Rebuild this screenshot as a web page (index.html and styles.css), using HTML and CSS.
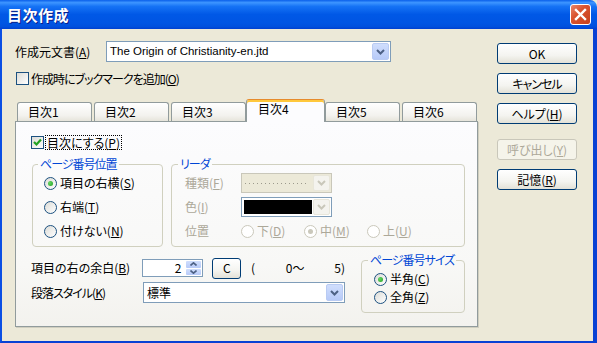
FILE: index.html
```html
<!DOCTYPE html>
<html lang="ja">
<head>
    <meta charset="UTF-8">
    <title>目次作成</title>
    <link rel="stylesheet" href="styles.css">
</head>
<body>
    <div class="window">
        <div class="titlebar">
            <span class="title">目次作成</span>
            <span class="close-btn">
                <svg width="13" height="13" viewBox="0 0 13 13"><path d="M2 2 L11 11 M11 2 L2 11" stroke="#fff" stroke-width="2.4" stroke-linecap="square"/></svg>
            </span>
        </div>
        <div class="frame">
            <div class="main">
                <div class="source-row">
                    <span class="source-label">作成元文書(<u>A</u>)</span>
                    <div class="combo source-combo">
                        <span class="combo-text latin">The Origin of Christianity-en.jtd</span>
                        <span class="drop"><svg width="9" height="6" viewBox="0 0 9 6"><path d="M1 1 L4.5 4.5 L8 1" fill="none" stroke="#4D6185" stroke-width="2"/></svg></span>
                    </div>
                </div>

                <div class="check-row bookmark">
                    <span class="check"></span>
                    <span class="check-label narrow">作成時にブックマークを追加(<u>O</u>)</span>
                </div>

                <div class="tabs">
                    <div class="tab">目次1</div>
                    <div class="tab">目次2</div>
                    <div class="tab">目次3</div>
                    <div class="tab active">目次4</div>
                    <div class="tab">目次5</div>
                    <div class="tab">目次6</div>
                </div>

                <div class="panel">
                    <div class="check-row toc-check">
                        <span class="check checked">
                            <svg width="11" height="11" viewBox="0 0 11 11"><path d="M2 5 L4.5 7.5 L9 2.5" fill="none" stroke="#21A121" stroke-width="2.2"/></svg>
                        </span>
                        <span class="check-label focus">目次にする(<u>P</u>)</span>
                    </div>

                    <div class="groups">
                        <fieldset class="group pos-group">
                            <legend class="narrow">ページ番号位置</legend>
                            <div class="group-body">
                                <div class="radio-row"><span class="radio checked"></span><span>項目の右横(<u>S</u>)</span></div>
                                <div class="radio-row"><span class="radio"></span><span>右端(<u>T</u>)</span></div>
                                <div class="radio-row"><span class="radio"></span><span>付けない(<u>N</u>)</span></div>
                            </div>
                        </fieldset>

                        <fieldset class="group leader-group">
                            <legend class="narrow">リーダ</legend>
                            <div class="group-body">
                                <div class="leader-row disabled">
                                    <span class="leader-label">種類(<u>F</u>)</span>
                                    <div class="combo small-combo off">
                                        <span class="dots-cell"><span class="dots-line"></span></span>
                                        <span class="drop off"><svg width="9" height="6" viewBox="0 0 9 6"><path d="M1 1 L4.5 4.5 L8 1" fill="none" stroke="#C9C7BA" stroke-width="2"/></svg></span>
                                    </div>
                                </div>
                                <div class="leader-row disabled">
                                    <span class="leader-label">色(<u>I</u>)</span>
                                    <div class="combo small-combo color-combo">
                                        <span class="swatch"></span>
                                        <span class="drop off"><svg width="9" height="6" viewBox="0 0 9 6"><path d="M1 1 L4.5 4.5 L8 1" fill="none" stroke="#C9C7BA" stroke-width="2"/></svg></span>
                                    </div>
                                </div>
                                <div class="leader-row disabled">
                                    <span class="leader-label">位置</span>
                                    <div class="radio-opt"><span class="radio off"></span><span>下(<u>D</u>)</span></div>
                                    <div class="radio-opt"><span class="radio off checked"></span><span>中(<u>M</u>)</span></div>
                                    <div class="radio-opt"><span class="radio off"></span><span>上(<u>U</u>)</span></div>
                                </div>
                            </div>
                        </fieldset>
                    </div>

                    <div class="bottom">
                        <div class="bottom-fields">
                            <div class="field-row">
                                <span class="field-label">項目の右の余白(<u>B</u>)</span>
                                <div class="spin">
                                    <span class="spin-val">2</span>
                                    <span class="spin-btns">
                                        <span class="spin-half"><svg width="7" height="4" viewBox="0 0 7 4"><path d="M0.5 3.5 L3.5 0.8 L6.5 3.5" fill="none" stroke="#4D6185" stroke-width="1.6"/></svg></span>
                                        <span class="spin-half"><svg width="7" height="4" viewBox="0 0 7 4"><path d="M0.5 0.5 L3.5 3.2 L6.5 0.5" fill="none" stroke="#4D6185" stroke-width="1.6"/></svg></span>
                                    </span>
                                </div>
                                <span class="btn small-btn">C</span>
                                <span class="range-open">(</span>
                                <span class="range-min">0〜</span>
                                <span class="range-max">5)</span>
                            </div>
                            <div class="field-row style-row">
                                <span class="field-label narrow">段落スタイル(<u>K</u>)</span>
                                <div class="combo style-combo">
                                    <span class="combo-text">標準</span>
                                    <span class="drop"><svg width="9" height="6" viewBox="0 0 9 6"><path d="M1 1 L4.5 4.5 L8 1" fill="none" stroke="#4D6185" stroke-width="2"/></svg></span>
                                </div>
                            </div>
                        </div>

                        <fieldset class="group size-group">
                            <legend class="narrow">ページ番号サイズ</legend>
                            <div class="group-body">
                                <div class="radio-row short"><span class="radio checked"></span><span>半角(<u>C</u>)</span></div>
                                <div class="radio-row short"><span class="radio"></span><span>全角(<u>Z</u>)</span></div>
                            </div>
                        </fieldset>
                    </div>
                </div>
            </div>

            <div class="buttons">
                <span class="btn">OK</span>
                <span class="btn narrow">キャンセル</span>
                <span class="btn">ヘルプ(<u>H</u>)</span>
                <span class="btn disabled call-btn">呼び出し(<u>Y</u>)</span>
                <span class="btn">記憶(<u>R</u>)</span>
            </div>
        </div>
    </div>
</body>
</html>
```

FILE: styles.css
```css
* {
    margin: 0;
    padding: 0;
    box-sizing: border-box;
}

body {
    width: 597px;
    height: 343px;
    overflow: hidden;
    font-family: "Noto Sans CJK JP", sans-serif;
    font-size: 12px;
    line-height: 14px;
    color: #000;
    background: #ECE9D8;
    font-feature-settings: "palt";
}

u {
    text-decoration: underline;
    text-underline-offset: 1px;
}

/* カナの多いラベルは少し詰める */
.narrow {
    letter-spacing: -1px;
}

.window {
    width: 597px;
    height: 343px;
    display: flex;
    flex-direction: column;
}

/* タイトルバー */
.titlebar {
    height: 29px;
    flex-shrink: 0;
    display: flex;
    align-items: center;
    justify-content: space-between;
    padding: 0 6px 0 7px;
    border-top-right-radius: 7px;
    background: linear-gradient(#0A5FEA 0%, #3D95FF 9%, #1673F5 22%, #0058E6 50%, #0055E3 80%, #0050DD 92%, #0040D0 100%);
}

.title {
    color: #fff;
    font-size: 15px;
    font-weight: bold;
    letter-spacing: 0.5px;
    text-shadow: 1px 1px 0 #0A1E8A;
}

.close-btn {
    width: 21px;
    height: 21px;
    display: flex;
    align-items: center;
    justify-content: center;
    border: 1px solid #fff;
    border-radius: 3px;
    background: linear-gradient(135deg, #E8866C 0%, #D9532F 40%, #C7401C 100%);
}

.frame {
    flex: 1;
    display: flex;
    border-left: 2px solid #0B4FE4;
    border-right: 4px solid #0841D4;
    border-bottom: 2px solid #0841D4;
    background: #ECE9D8;
}

.main {
    width: 463px;
    margin-left: 13px;
}

/* 作成元文書 */
.source-row {
    display: flex;
    align-items: center;
    margin-top: 12px;
    height: 21px;
}

.source-label {
    width: 91px;
}

.combo {
    display: flex;
    height: 21px;
    border: 1px solid #7F9DB9;
    background: #fff;
}

.source-combo {
    width: 285px;
}

.combo-text {
    flex: 1;
    padding-left: 3px;
    line-height: 19px;
    white-space: nowrap;
    overflow: hidden;
}

.latin {
    font-family: "Liberation Sans", sans-serif;
    font-size: 11.5px;
}

.drop {
    width: 17px;
    flex-shrink: 0;
    margin: 1px;
    display: flex;
    align-items: center;
    justify-content: center;
    border: 1px solid #B9CBF3;
    border-radius: 2px;
    background: linear-gradient(#D0DEFD, #B7CAF8);
}

.drop.off {
    border-color: #E8E6DA;
    background: #F4F3EE;
}

/* チェックボックス */
.check-row {
    display: flex;
    align-items: center;
    height: 13px;
}

.bookmark {
    margin-top: 10px;
    margin-left: 1px;
}

.check {
    width: 13px;
    height: 13px;
    flex-shrink: 0;
    display: flex;
    align-items: center;
    justify-content: center;
    border: 1px solid #1C5180;
    background: linear-gradient(135deg, #DCDCD7, #FFFFFF);
}

.check-label {
    margin-left: 2px;
}

.check-label.focus {
    padding: 0 1px;
    outline: 1px dotted #000;
    line-height: 13px;
}

/* タブ */
.tabs {
    display: flex;
    align-items: flex-end;
    gap: 2px;
    height: 22px;
    margin-top: 14px;
    padding-left: 2px;
}

.tab {
    width: 75px;
    height: 19px;
    padding-left: 10px;
    line-height: 18px;
    border: 1px solid #919B9C;
    border-bottom: none;
    border-radius: 3px 3px 0 0;
    background: linear-gradient(#FFFFFF, #F3F2EE 70%, #E6E4DB);
}

.tab.active {
    position: relative;
    z-index: 1;
    width: 79px;
    height: 23px;
    margin: 0 -2px -1px;
    padding-left: 11px;
    line-height: 17px;
    border-top: 1px solid #E68B2C;
    box-shadow: inset 0 2px 0 #FFC83C;
    background: #FCFCFE;
}

.panel {
    height: 206px;
    padding: 14px 0 0 15px;
    border: 1px solid #919B9C;
    box-shadow: 1px 1px 0 #D0CEBF;
    background: linear-gradient(#FCFCFE 0%, #F8F8F6 70%, #F3F2EE 100%);
}

/* グループボックス */
.groups {
    display: flex;
    gap: 8px;
    margin-top: 8px;
    margin-left: 1px;
}

.group {
    border: 1px solid #D0D0BF;
    border-radius: 4px;
    padding: 0;
}

.group legend {
    margin-left: 5px;
    padding: 0 2px;
    line-height: 14px;
    white-space: nowrap;
    color: #0046D5;
}

.pos-group {
    width: 131px;
    height: 90px;
}

.pos-group .group-body {
    padding-left: 11px;
}

.radio-row {
    display: flex;
    align-items: center;
    height: 24px;
}

.radio-row.short {
    height: 18px;
}

.radio {
    width: 13px;
    height: 13px;
    flex-shrink: 0;
    margin-right: 3px;
    display: flex;
    align-items: center;
    justify-content: center;
    border: 1px solid #1C5180;
    border-radius: 50%;
    background: linear-gradient(135deg, #DCDCD7, #FFFFFF);
}

.radio.checked::after {
    content: "";
    width: 5px;
    height: 5px;
    border-radius: 50%;
    background: radial-gradient(circle at 35% 35%, #64D664, #21A121);
}

.radio.off {
    border-color: #CAC8BB;
    background: #FFFFFF;
}

.radio.off.checked::after {
    background: #CAC8BB;
}

.leader-group {
    width: 294px;
    height: 90px;
}

.leader-group legend {
    margin-left: 6px;
}

.leader-group .group-body {
    padding-left: 13px;
}

.leader-row {
    display: flex;
    align-items: center;
    height: 24px;
}

.disabled {
    color: #ACA899;
}

.leader-label {
    width: 56px;
}

.small-combo {
    width: 91px;
    height: 20px;
}

.small-combo.off {
    border-color: #C9C7BA;
    background: #ECE9D8;
}

.dots-cell {
    flex: 1;
    display: flex;
    align-items: center;
    padding: 0 4px 0 3px;
}

.dots-line {
    flex: 1;
    height: 1px;
    background: repeating-linear-gradient(to right, #9C9A8C 0 1px, transparent 1px 4px);
}

.swatch {
    flex: 1;
    margin: 2px 0 2px 2px;
    background: #000;
}

.radio-opt {
    display: flex;
    align-items: center;
    width: 63px;
}

/* 下段 */
.bottom {
    display: flex;
}

.bottom-fields {
    width: 314px;
    margin-top: 12px;
}

.field-row {
    display: flex;
    align-items: center;
    height: 18px;
}

.style-row {
    height: 21px;
    margin-top: 5px;
}

.field-label {
    width: 112px;
}

.spin {
    display: flex;
    width: 62px;
    height: 18px;
    border: 1px solid #7F9DB9;
    background: #fff;
}

.spin-val {
    flex: 1;
    text-align: right;
    padding-right: 4px;
    line-height: 16px;
}

.spin-btns {
    width: 15px;
    margin: 1px;
    display: flex;
    flex-direction: column;
    gap: 1px;
}

.spin-half {
    flex: 1;
    display: flex;
    align-items: center;
    justify-content: center;
    border-radius: 1px;
    background: linear-gradient(#D0DEFD, #B7CAF8);
}

.small-btn {
    width: 29px;
    height: 16px;
    margin-left: 9px;
    line-height: 14px;
}

.range-open {
    width: 35px;
    margin-left: 10px;
}

.range-min {
    width: 49px;
}

.style-combo {
    width: 202px;
}

.size-group {
    width: 104px;
    height: 60px;
    margin-top: 6px;
    margin-left: 16px;
}

.size-group legend {
    margin-left: 6px;
}

.size-group .group-body {
    padding: 3px 0 0 12px;
}

/* ボタン */
.buttons {
    display: flex;
    flex-direction: column;
    width: 80px;
    margin-left: 19px;
    margin-top: 14px;
}

.btn {
    display: flex;
    align-items: center;
    justify-content: center;
    height: 21px;
    margin-bottom: 9px;
    border: 1px solid #003C74;
    border-radius: 3px;
    background: linear-gradient(#FFFFFF 0%, #F4F4F0 60%, #E3E1D7 100%);
}

.buttons .btn:nth-child(3) {
    margin-bottom: 15px;
}

.btn.disabled {
    color: #ACA899;
    border-color: #C9C7BA;
    background: #F5F4EA;
}

.field-row .btn {
    margin-bottom: 0;
}
```
